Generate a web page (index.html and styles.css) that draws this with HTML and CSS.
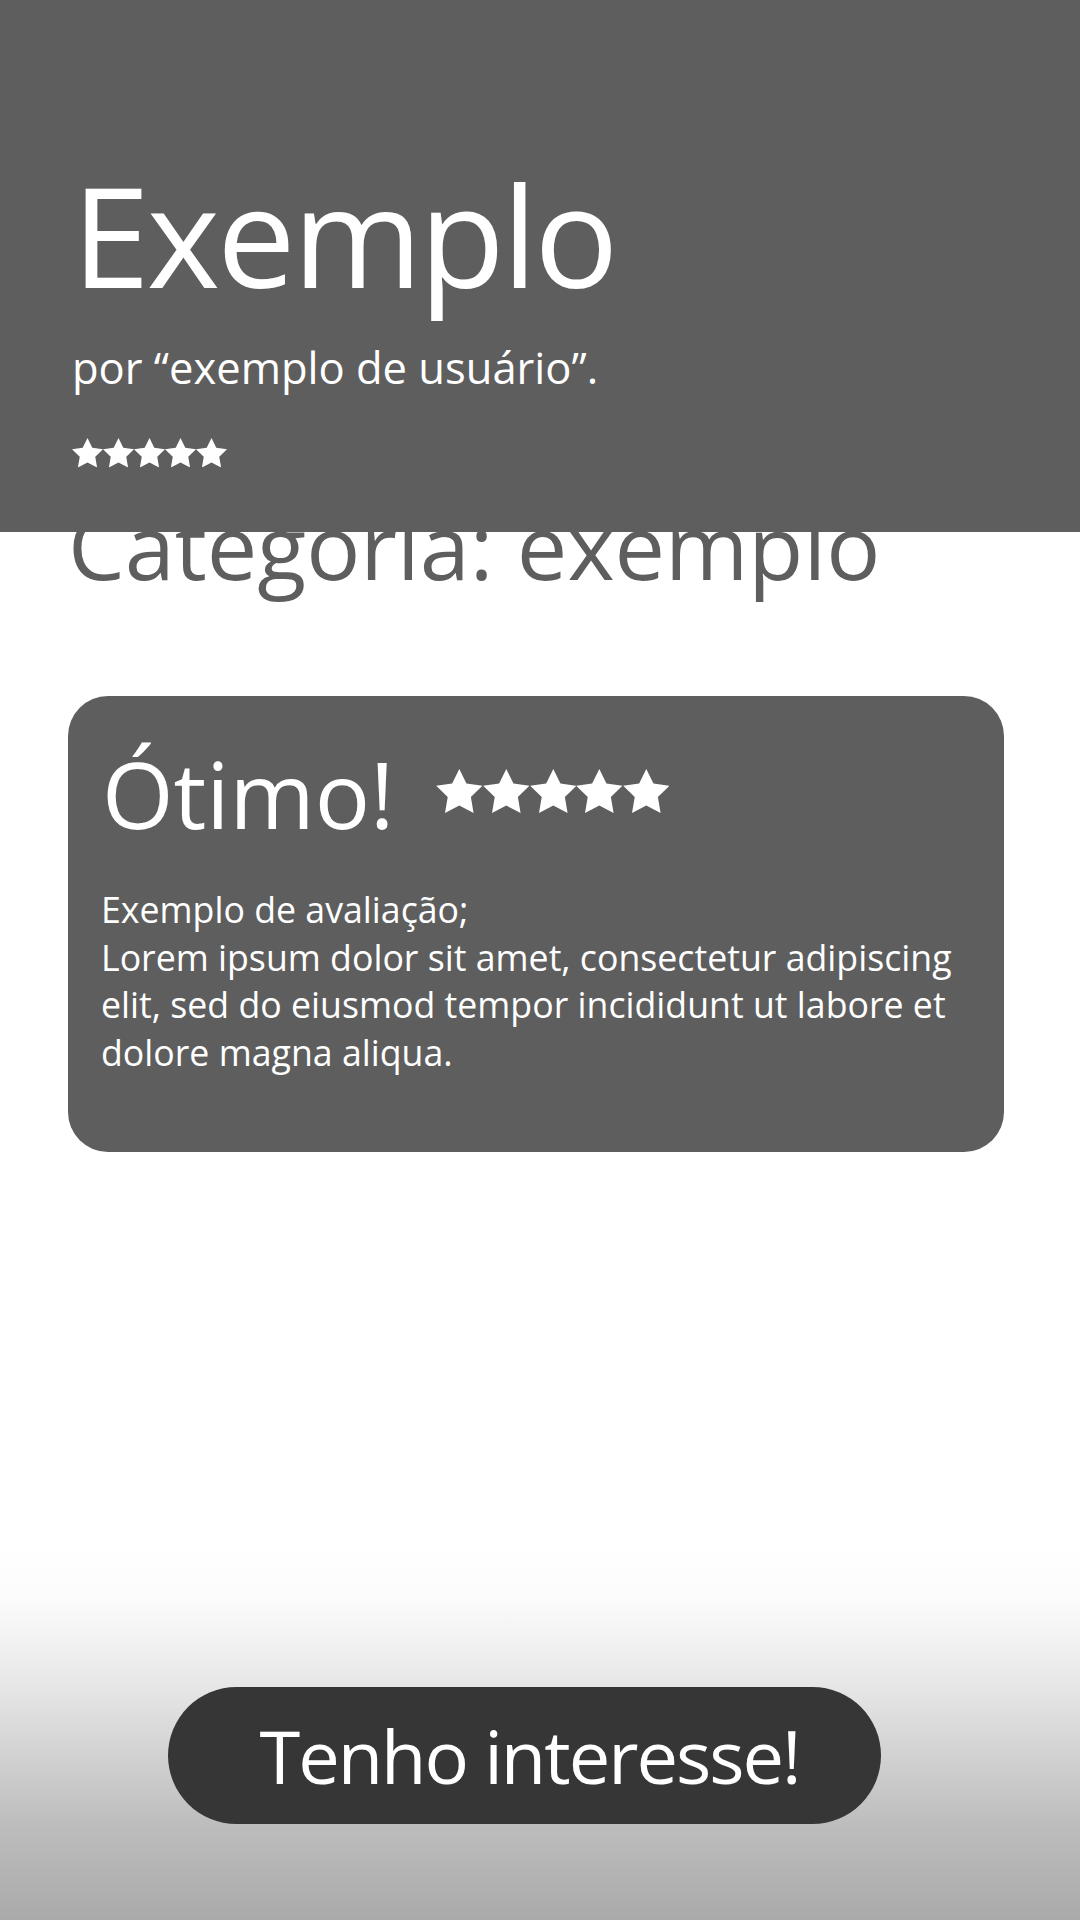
FILE: index.html
```html
<!DOCTYPE html>
<html lang="pt-BR">
<head>
  <meta charset="UTF-8">
  <meta name="viewport" content="width=device-width, initial-scale=1.0">
  <title>Exemplo</title>
  <link rel="stylesheet" href="styles.css">
</head>
<body>

  <!-- estrela usada nas avaliações -->
  <svg class="defs" aria-hidden="true">
    <symbol id="star" viewBox="2 2 20 19.02">
      <path d="M12 2l3.09 6.26L22 9.27l-5 4.87 1.18 6.88L12 17.77l-6.18 3.25L7 14.14 2 9.27l6.91-1.01L12 2z"/>
    </symbol>
  </svg>

  <!-- topo fixo -->
  <header class="top">
    <h1 class="title">Exemplo</h1>
    <p class="author">por “exemplo de usuário”.</p>
    <div class="stars stars-small">
      <svg><use href="#star"/></svg>
      <svg><use href="#star"/></svg>
      <svg><use href="#star"/></svg>
      <svg><use href="#star"/></svg>
      <svg><use href="#star"/></svg>
    </div>
  </header>

  <main class="content">
    <h2 class="category">Categoria: exemplo</h2>

    <div class="review">
      <div class="review-head">
        <h3 class="review-title">Ótimo!</h3>
        <div class="stars stars-big">
          <svg><use href="#star"/></svg>
          <svg><use href="#star"/></svg>
          <svg><use href="#star"/></svg>
          <svg><use href="#star"/></svg>
          <svg><use href="#star"/></svg>
        </div>
      </div>
      <p class="review-text">Exemplo de avaliação;<br>Lorem ipsum dolor sit amet, consectetur adipiscing elit, sed do eiusmod tempor incididunt ut labore et dolore magna aliqua.</p>
    </div>
  </main>

  <footer class="bottom">
    <button class="interest-button">Tenho interesse!</button>
  </footer>

</body>
</html>
```

FILE: styles.css
```css
body {
  font-family: "Open Sans", "Noto Sans", sans-serif;
  margin: 0;
  padding: 0;
  width: 1080px;
  height: 1920px;
  display: flex;
  flex-direction: column;
  background: #fff;
  overflow: hidden;
}

.defs {
  display: none;
}

/* topo */
.top {
  position: fixed;
  top: 0;
  left: 0;
  right: 0;
  height: 532px;
  box-sizing: border-box;
  padding: 164px 0 0 72px;
  background: #5e5e5e;
  color: #fff;
  z-index: 10;
}

.title {
  margin: 0;
  font-size: 140px;
  line-height: 140px;
  font-weight: 400;
  letter-spacing: -3px;
}

.author {
  margin: 38px 0 0;
  font-size: 43.5px;
  line-height: 52px;
}

.stars {
  display: flex;
  fill: #fff;
}

.stars-small {
  margin-top: 44px;
}

.stars-small svg {
  width: 31px;
  height: 29.5px;
}

.stars-big svg {
  width: 46.6px;
  height: 44px;
}

/* conteúdo */
.content {
  padding: 492px 0 0 68px;
}

.category {
  margin: 0;
  font-size: 90px;
  line-height: 107px;
  font-weight: 400;
  color: #5e5e5e;
  white-space: nowrap;
}

.review {
  margin-top: 97px;
  width: 936px;
  height: 456px;
  box-sizing: border-box;
  padding: 43px 20px 0 34px;
  background: #5e5e5e;
  border-radius: 40px;
  color: #fff;
}

.review-head {
  display: flex;
  align-items: center;
  gap: 42px;
}

.review-title {
  margin: 0;
  font-size: 92px;
  line-height: 110px;
  font-weight: 400;
}

.review-head .stars-big {
  margin-top: -6px;
}

.review-text {
  margin: 37px 0 0 -1px;
  font-size: 35.7px;
  line-height: 47.5px;
}

/* botão */
.bottom {
  margin-top: auto;
  height: 380px;
  box-sizing: border-box;
  padding: 147px 0 0 168px;
  background: linear-gradient(to bottom, #fff 0%, #fcfcfc 15%, #e8e8e8 37%, #bdbdbd 75%, #aaa 100%);
}

.interest-button {
  width: 713px;
  height: 137px;
  border: none;
  border-radius: 69px;
  background: #363636;
  color: #fff;
  font-family: "Open Sans", "Noto Sans", sans-serif;
  font-size: 74px;
  letter-spacing: -2px;
  padding: 0 0 0 10px;
  cursor: pointer;
}
```
